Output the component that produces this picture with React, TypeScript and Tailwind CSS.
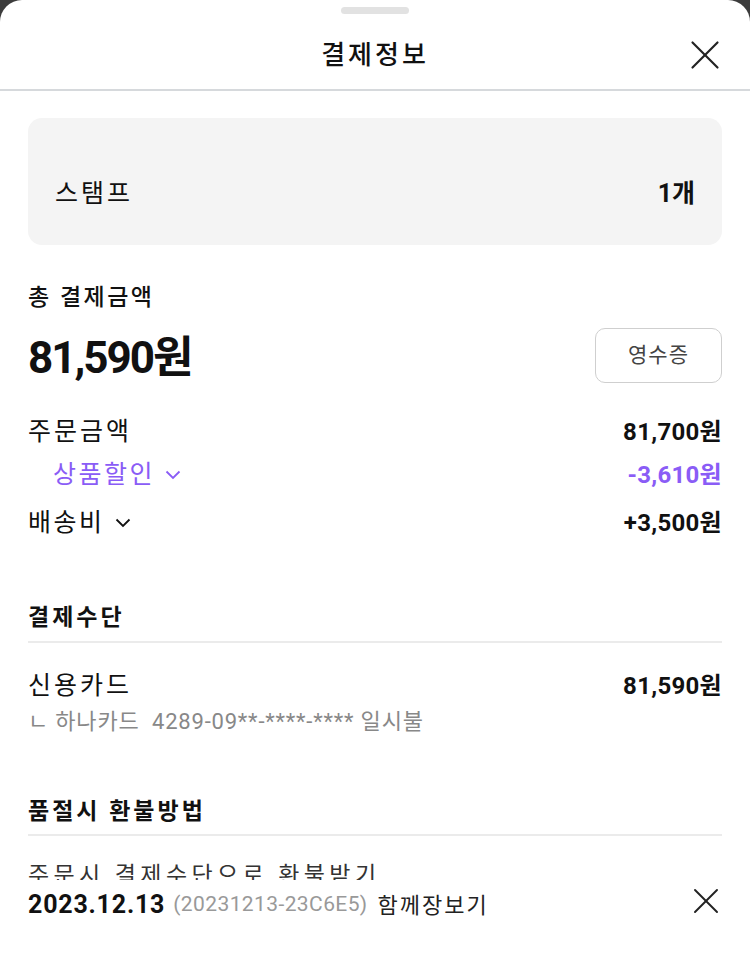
import { X } from "lucide-react";

const font = { fontFamily: 'Roboto, "Noto Sans CJK KR", sans-serif' };

function Chevron() {
  return (
    <svg width="16" height="10" viewBox="0 0 16 10" fill="none" stroke="currentColor" strokeWidth="1.8">
      <polyline points="1.5,1.5 8,8 14.5,1.5" />
    </svg>
  );
}

function Row({ label, value, className = "" }: { label: React.ReactNode; value: string; className?: string }) {
  return (
    <div className={`h-[34px] flex items-center justify-between ${className}`}>
      {label}
      <span className="font-bold text-[24px] tracking-[0.3px]">{value}</span>
    </div>
  );
}

export default function App() {
  return (
    <div className="bg-[#3c3c3c] w-[750px] h-[972px]" style={font}>
      <div className="bg-white rounded-t-[22px] h-[972px] overflow-hidden text-[#111]">
        <div className="flex justify-center pt-[7px]">
          <div className="w-[68px] h-[7px] rounded-full bg-[#e2e2e2]" />
        </div>
        <div className="relative h-[77px] pt-[7px] flex items-center justify-center border-b-2 border-[#d6d9dc]">
          <span className="text-[26px] font-medium tracking-[3px] leading-none">결제정보</span>
          <X className="absolute right-[20px] top-[16px] text-[#222]" size={50} strokeWidth={1.05} />
        </div>

        <div className="px-[28px]">
          <div className="mt-[27px] h-[127px] pt-[24px] rounded-[14px] bg-[#f4f4f4] flex items-center justify-between px-[27px]">
            <span className="text-[25px] tracking-[3px]">스탬프</span>
            <span className="text-[25px] font-bold">1개</span>
          </div>

          <div className="mt-[38px] h-[30px] flex items-center text-[23px] font-medium tracking-[2.5px]">총 결제금액</div>
          <div className="mt-[15px] h-[55px] flex items-center justify-between">
            <span className="text-[44px] font-bold tracking-[-2px] leading-none pt-[4px]">81,590원</span>
            <button className="w-[127px] h-[55px] border border-[#cfcfcf] rounded-[10px] text-[21px] tracking-[1px] text-[#444]">
              영수증
            </button>
          </div>

          <Row className="mt-[32px]" label={<span className="text-[25px] tracking-[3px]">주문금액</span>} value="81,700원" />
          <Row
            className="mt-[9px] text-[#8a5cf6]"
            label={
              <span className="pl-[25px] text-[25px] tracking-[2.5px] flex items-center gap-[10px]">
                상품할인 <Chevron />
              </span>
            }
            value="-3,610원"
          />
          <Row
            className="mt-[14px]"
            label={
              <span className="text-[25px] tracking-[2.5px] flex items-center gap-[10px]">
                배송비 <Chevron />
              </span>
            }
            value="+3,500원"
          />

          <div className="mt-[63px] h-[30px] flex items-center text-[23px] font-bold tracking-[3px]">결제수단</div>
          <div className="pt-[8px] border-b-2 border-[#ebebeb]" />
          <Row className="mt-[26px]" label={<span className="text-[25px] tracking-[3px]">신용카드</span>} value="81,590원" />
          <div className="mt-[3px] h-[30px] flex items-center text-[22px] text-[#888] tracking-[0.8px]">
            ㄴ 하나카드&nbsp; 4289-09**-****-**** 일시불
          </div>

          <div className="mt-[61px] h-[30px] flex items-center text-[23px] font-bold tracking-[3px]">품절시 환불방법</div>
          <div className="pt-[7px] border-b-2 border-[#ebebeb]" />
          <div className="mt-[25px] h-[19px] overflow-hidden">
            <div className="text-[23px] text-[#333] leading-[30px] tracking-[4.4px]">주문시 결제수단으로 환불받기</div>
          </div>
          <div className="h-[50px] flex items-center justify-between">
            <div className="flex items-center">
              <span className="text-[25px] font-bold tracking-[0.8px]">2023.12.13</span>
              <span className="ml-[8px] text-[21px] text-[#999] tracking-[0.4px]">(20231213-23C6E5)</span>
              <span className="ml-[10px] text-[22px] text-[#222] tracking-[2px]">함께장보기</span>
            </div>
            <X className="-mr-[6px] -mt-[8px] text-[#222]" size={44} strokeWidth={1.05} />
          </div>
        </div>
      </div>
    </div>
  );
}
